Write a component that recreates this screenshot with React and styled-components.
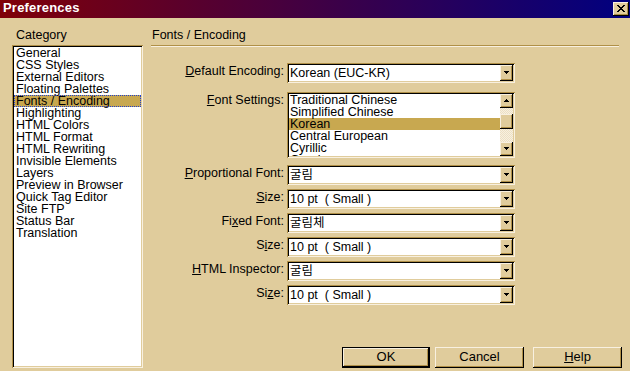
import React from "react";
import styled, { createGlobalStyle, css } from "styled-components";

const FACE = "#e0cc9c";
const SHADOW = "#b09048";
const LIGHT = "#f8f0e0";
const SEL = "#c8a850";
const FONT = `"Liberation Sans", Arial, "Noto Sans CJK KR", sans-serif`;

const Global = createGlobalStyle`
  html, body { margin: 0; padding: 0; background: ${FACE}; }
  body { font-family: ${FONT}; font-size: 12.5px; color: #000; }
  * { box-sizing: border-box; }
`;

const sunken = css`
  box-shadow: inset 1px 1px ${SHADOW}, inset -1px -1px ${LIGHT},
    inset 2px 2px #000, inset -2px -2px ${FACE};
  padding: 2px;
`;

const raised = css`
  background: ${FACE};
  box-shadow: inset -1px -1px #000, inset 1px 1px ${LIGHT},
    inset -2px -2px ${SHADOW};
`;

const Window = styled.div`
  width: 630px;
  height: 371px;
  display: flex;
  flex-direction: column;
  background: ${FACE};
  overflow: hidden;
`;

const TitleBar = styled.div`
  height: 18px;
  flex: none;
  display: flex;
  justify-content: space-between;
  align-items: flex-start;
  padding: 0 1px 0 3px;
  background: linear-gradient(to right, #800008, #000080);
`;

const Title = styled.div`
  color: #fff;
  font-weight: bold;
  font-size: 13px;
  line-height: 16px;
  letter-spacing: 0.2px;
`;

const CloseButton = styled.div`
  ${raised};
  width: 16px;
  height: 14px;
  margin-top: 2px;
  display: flex;
  align-items: center;
  justify-content: center;
  padding: 0 1px 1px 0;
`;

const Body = styled.div`
  flex: 1;
  display: flex;
  padding: 9px 8px 3px 12px;
  min-height: 0;
`;

const Sidebar = styled.div`
  width: 131px;
  display: flex;
  flex-direction: column;
`;

const SectionLabel = styled.div`
  line-height: 16px;
  height: 16px;
  margin-bottom: 2px;
  padding-left: ${(p) => p.$indent}px;
`;

const ListBox = styled.div`
  ${sunken};
  flex: 1;
  background: #fff;
  overflow: hidden;
`;

const ListItem = styled.div`
  height: 12px;
  line-height: 12px;
  padding-left: 2px;
  white-space: nowrap;
  background: ${(p) => (p.$selected ? SEL : "transparent")};
  ${(p) =>
    p.$focused &&
    css`
      outline: 1px dotted #2040d0;
      outline-offset: -1px;
    `}
`;

const Main = styled.div`
  flex: 1;
  display: flex;
  flex-direction: column;
  margin-left: 8px;
`;

const Separator = styled.div`
  height: 2px;
  border-top: 1px solid ${SHADOW};
  border-bottom: 1px solid ${LIGHT};
  margin-right: 3px;
`;

const Form = styled.div`
  display: flex;
  flex-direction: column;
  margin-top: 16px;
`;

const Row = styled.div`
  display: flex;
  align-items: flex-start;
  gap: 3px;
  margin-top: ${(p) => p.$mt || 0}px;
`;

const Label = styled.div`
  width: 133px;
  text-align: right;
  line-height: 17px;
  white-space: nowrap;
  u { text-decoration: underline; text-underline-offset: 1px; }
`;

const Combo = styled.div`
  ${sunken};
  width: 228px;
  height: 20px;
  display: flex;
`;

const ComboText = styled.div`
  flex: 1;
  background: #fff;
  line-height: 16px;
  padding-left: 1px;
  white-space: pre;
  overflow: hidden;
`;

const ArrowButton = styled.div`
  ${raised};
  width: 13px;
  height: ${(p) => p.$h || 16}px;
  flex: none;
  display: flex;
  align-items: center;
  justify-content: center;
  padding: 0 1px 1px 0;
`;

const ListField = styled.div`
  ${sunken};
  width: 228px;
  height: 66px;
  display: flex;
  background: #fff;
`;

const ListItems = styled.div`
  flex: 1;
  overflow: hidden;
  background: #fff;
`;

const FieldItem = styled.div`
  height: 12px;
  line-height: 12px;
  padding-left: 1px;
  white-space: nowrap;
  background: ${(p) => (p.$selected ? SEL : "transparent")};
`;

const ScrollBar = styled.div`
  width: 13px;
  display: flex;
  flex-direction: column;
`;

const Track = styled.div`
  flex: 1;
  background-color: #f0e6d0;
  background-image: repeating-conic-gradient(${LIGHT} 0 25%, #ece0c4 0 50%);
  background-size: 2px 2px;
`;

const Thumb = styled.div`
  ${raised};
  height: 15px;
  margin-top: ${(p) => p.$offset}px;
`;

const ButtonRow = styled.div`
  margin-top: auto;
  display: flex;
  justify-content: flex-end;
`;

const PushButton = styled.div`
  ${raised};
  width: ${(p) => p.$w}px;
  height: 21px;
  margin-left: ${(p) => p.$ml || 0}px;
  display: flex;
  align-items: center;
  justify-content: center;
  line-height: 16px;
  font-size: 13px;
  padding-bottom: 1px;
  ${(p) =>
    p.$default &&
    css`
      border: 1px solid #000;
    `}
  u { text-decoration: underline; text-underline-offset: 1px; }
`;

const DownArrow = () => (
  <svg width="5" height="3" viewBox="0 0 5 3" shapeRendering="crispEdges">
    <rect x="0" y="0" width="5" height="1" fill="#000" />
    <rect x="1" y="1" width="3" height="1" fill="#000" />
    <rect x="2" y="2" width="1" height="1" fill="#000" />
  </svg>
);

const UpArrow = () => (
  <svg width="5" height="3" viewBox="0 0 5 3" shapeRendering="crispEdges">
    <rect x="2" y="0" width="1" height="1" fill="#000" />
    <rect x="1" y="1" width="3" height="1" fill="#000" />
    <rect x="0" y="2" width="5" height="1" fill="#000" />
  </svg>
);

const CloseGlyph = () => (
  <svg width="8" height="7" viewBox="0 0 8 7" shapeRendering="crispEdges">
    {[0, 1, 2, 3, 4, 5, 6].map((i) => (
      <React.Fragment key={i}>
        <rect x={i} y={i} width="2" height="1" fill="#000" />
        <rect x={6 - i} y={i} width="2" height="1" fill="#000" />
      </React.Fragment>
    ))}
  </svg>
);

const categories = [
  "General",
  "CSS Styles",
  "External Editors",
  "Floating Palettes",
  "Fonts / Encoding",
  "Highlighting",
  "HTML Colors",
  "HTML Format",
  "HTML Rewriting",
  "Invisible Elements",
  "Layers",
  "Preview in Browser",
  "Quick Tag Editor",
  "Site FTP",
  "Status Bar",
  "Translation",
];

const encodings = [
  "Traditional Chinese",
  "Simplified Chinese",
  "Korean",
  "Central European",
  "Cyrillic",
  "Greek",
  "Icelandic",
];

const ComboBox = ({ value }) => (
  <Combo>
    <ComboText>{value}</ComboText>
    <ArrowButton>
      <DownArrow />
    </ArrowButton>
  </Combo>
);

export default function App() {
  return (
    <>
      <Global />
      <Window>
        <TitleBar>
          <Title>Preferences</Title>
          <CloseButton>
            <CloseGlyph />
          </CloseButton>
        </TitleBar>
        <Body>
          <Sidebar>
            <SectionLabel $indent={4}>Category</SectionLabel>
            <ListBox>
              {categories.map((c) => (
                <ListItem key={c} $selected={c === "Fonts / Encoding"} $focused={c === "Fonts / Encoding"}>
                  {c}
                </ListItem>
              ))}
            </ListBox>
          </Sidebar>
          <Main>
            <SectionLabel $indent={1}>Fonts / Encoding</SectionLabel>
            <Separator />
            <Form>
              <Row>
                <Label>
                  <u>D</u>efault Encoding:
                </Label>
                <ComboBox value="Korean (EUC-KR)" />
              </Row>
              <Row $mt={9}>
                <Label>
                  <u>F</u>ont Settings:
                </Label>
                <ListField>
                  <ListItems>
                    {encodings.map((e) => (
                      <FieldItem key={e} $selected={e === "Korean"}>
                        {e}
                      </FieldItem>
                    ))}
                  </ListItems>
                  <ScrollBar>
                    <ArrowButton $h={14}>
                      <UpArrow />
                    </ArrowButton>
                    <Track>
                      <Thumb $offset={6} />
                    </Track>
                    <ArrowButton $h={14}>
                      <DownArrow />
                    </ArrowButton>
                  </ScrollBar>
                </ListField>
              </Row>
              <Row $mt={7}>
                <Label>
                  <u>P</u>roportional Font:
                </Label>
                <ComboBox value="굴림" />
              </Row>
              <Row $mt={4}>
                <Label>
                  <u>S</u>ize:
                </Label>
                <ComboBox value="10 pt  ( Small )" />
              </Row>
              <Row $mt={4}>
                <Label>
                  Fi<u>x</u>ed Font:
                </Label>
                <ComboBox value="굴림체" />
              </Row>
              <Row $mt={4}>
                <Label>
                  S<u>i</u>ze:
                </Label>
                <ComboBox value="10 pt  ( Small )" />
              </Row>
              <Row $mt={4}>
                <Label>
                  <u>H</u>TML Inspector:
                </Label>
                <ComboBox value="굴림" />
              </Row>
              <Row $mt={4}>
                <Label>
                  Si<u>z</u>e:
                </Label>
                <ComboBox value="10 pt  ( Small )" />
              </Row>
            </Form>
            <ButtonRow>
              <PushButton $w={88} $default>
                OK
              </PushButton>
              <PushButton $w={89} $ml={5}>
                Cancel
              </PushButton>
              <PushButton $w={89} $ml={9}>
                <span>
                  <u>H</u>elp
                </span>
              </PushButton>
            </ButtonRow>
          </Main>
        </Body>
      </Window>
    </>
  );
}
